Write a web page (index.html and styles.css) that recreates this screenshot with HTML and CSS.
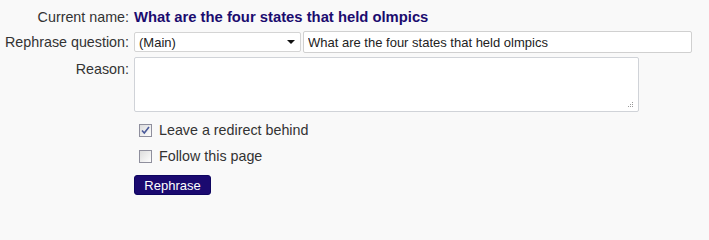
FILE: index.html
```html
<!DOCTYPE html>
<html>
<head>
<meta charset="utf-8">
<link rel="stylesheet" href="styles.css">
</head>
<body>
<form class="form">
  <div class="label row1">Current name:</div>
  <div class="value row1"><b class="current">What are the four states that held olmpics</b></div>

  <div class="label row2">Rephrase question:</div>
  <div class="value row2">
    <span class="select-wrap">
      <select class="select"><option>(Main)</option></select>
      <span class="arrow"></span>
    </span>
    <input class="text" type="text" value="What are the four states that held olmpics">
  </div>

  <div class="label row3">Reason:</div>
  <div class="value row3">
    <span class="ta-wrap">
      <textarea class="reason"></textarea>
      <svg class="grip" width="6" height="6" viewBox="0 0 6 6"><rect x="4" y="0" width="1" height="1" fill="#999"/><rect x="2" y="2" width="1" height="1" fill="#999"/><rect x="4" y="2" width="1" height="1" fill="#999"/><rect x="0" y="4" width="1" height="1" fill="#999"/><rect x="2" y="4" width="1" height="1" fill="#999"/><rect x="4" y="4" width="1" height="1" fill="#999"/></svg>
    </span>
  </div>

  <div class="label"></div>
  <div class="value checks">
    <label class="check-row">
      <span class="box"><svg width="11" height="11" viewBox="0 0 11 11"><path d="M2 5.5 L4.3 8 L9 2" fill="none" stroke="#4a5a9a" stroke-width="1.6"/></svg></span>
      <span>Leave a redirect behind</span>
    </label>
    <label class="check-row">
      <span class="box"></span>
      <span>Follow this page</span>
    </label>
    <button type="button" class="btn">Rephrase</button>
  </div>
</form>
</body>
</html>
```
FILE: styles.css
```css
html, body {
  margin: 0;
  padding: 0;
  background: #f9f9f9;
}
body {
  font-family: "Liberation Sans", Arial, sans-serif;
  font-size: 14px;
  color: #333;
}
.form {
  display: grid;
  grid-template-columns: 129px auto;
  column-gap: 5px;
  padding-top: 8px;
}
.label {
  text-align: right;
  color: #333;
  font-size: 14.3px;
  white-space: nowrap;
}
.row1 { line-height: 18px; height: 22px; }
.current { color: #1b0c6f; font-weight: bold; font-size: 14.8px; }
.row2 { height: 27px; padding-top: 1px; box-sizing: border-box; }
.label.row2 { line-height: 22px; padding-top: 1px; }
.value.row2 { display: flex; align-items: flex-start; gap: 2px; }
.select-wrap {
  position: relative;
  display: block;
  margin-top: 1px;
}
.select {
  appearance: none;
  -webkit-appearance: none;
  width: 167px;
  height: 20px;
  margin: 0;
  border: 1px solid #d4d4d4;
  border-radius: 2px;
  background: #fff;
  font-family: "Liberation Sans", Arial, sans-serif;
  font-size: 13px;
  color: #222;
  padding: 0 0 0 4px;
  box-sizing: border-box;
}
.arrow {
  position: absolute;
  right: 6px;
  top: 8px;
  width: 0;
  height: 0;
  border-left: 4px solid transparent;
  border-right: 4px solid transparent;
  border-top: 4px solid #111;
}
.text {
  width: 389px;
  height: 22px;
  margin: 0;
  border: 1px solid #d0d0d0;
  border-radius: 2px;
  background: #fff;
  font-family: "Liberation Sans", Arial, sans-serif;
  font-size: 13px;
  color: #222;
  padding: 0 0 0 4px;
  box-sizing: border-box;
}
.label.row3 { padding-top: 3px; line-height: 18px; }
.ta-wrap { position: relative; display: block; width: 505px; height: 55px; }
.reason {
  display: block;
  width: 505px;
  height: 55px;
  margin: 0;
  border: 1px solid #d0d3d8;
  border-radius: 2px;
  background: #fff;
  box-sizing: border-box;
  resize: none;
}
.grip { position: absolute; right: 5px; bottom: 4px; }
.checks {
  display: flex;
  flex-direction: column;
  align-items: flex-start;
  padding-top: 10px;
}
.check-row {
  display: flex;
  align-items: center;
  height: 16px;
  margin-bottom: 10px;
  padding-left: 5px;
  gap: 7px;
  color: #333;
  font-size: 14.3px;
}
.box {
  width: 11px;
  height: 11px;
  border: 1px solid #8f8f9d;
  background: linear-gradient(135deg, #dcdcdc, #fdfdfd);
  display: inline-flex;
  align-items: center;
  justify-content: center;
}
.box svg { display: block; }
.btn {
  margin-top: 1px;
  width: 77px;
  height: 20px;
  border: 1px solid #0e0560;
  border-radius: 3px;
  background: #1b0a70;
  color: #fff;
  font-family: "Liberation Sans", Arial, sans-serif;
  font-size: 13px;
  padding: 0;
}
```
